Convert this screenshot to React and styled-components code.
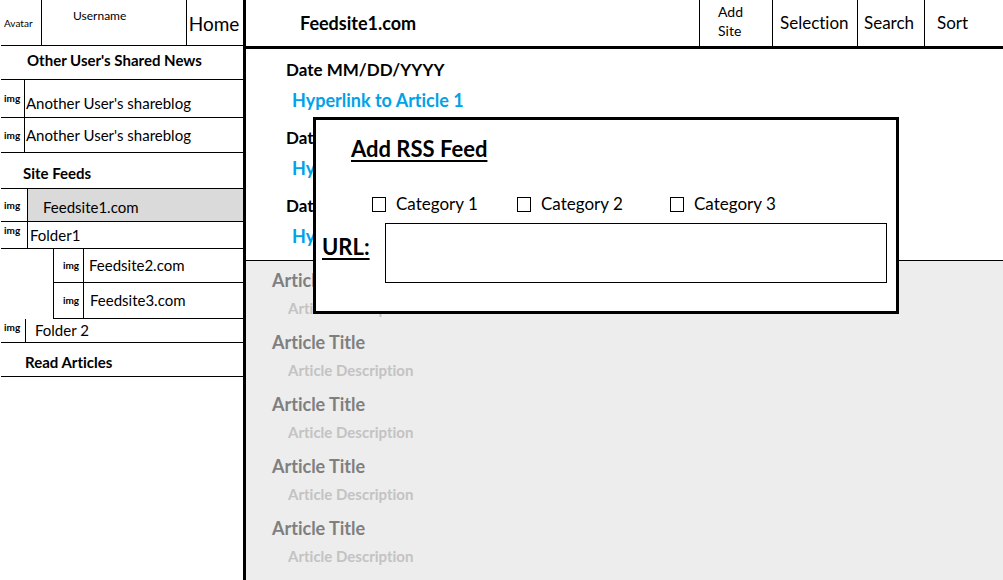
import React from "react";
import styled, { createGlobalStyle, css } from "styled-components";

const GlobalStyle = createGlobalStyle`
  *, *::before, *::after { box-sizing: border-box; }
  body {
    margin: 0;
    background: #fff;
    color: #000;
    font-family: Lato, "Liberation Sans", sans-serif;
    font-size: 15px;
    font-variant-ligatures: none;
    line-height: 20px;
  }
  h1, h2, h3, p, ul { margin: 0; padding: 0; }
  ul { list-style: none; }
  a { color: inherit; text-decoration: none; }
  button, input { font: inherit; font-variant-ligatures: none; color: inherit; }
`;

const Page = styled.div`
  display: grid;
  grid-template-columns: 246px minmax(0, 1fr);
  min-height: 100vh;
`;

const Sidebar = styled.aside`
  border-right: 3px solid #000;
  padding-left: 1px;
`;

const Profile = styled.header`
  display: flex;
  height: 46px;
  border-bottom: 1px solid #000;
`;

const Avatar = styled.div`
  display: flex;
  align-items: center;
  width: 41px;
  padding-left: 3px;
  border-right: 1px solid #000;
  font-size: 10px;
`;

const Username = styled.div`
  flex: 1;
  padding: 6px 0 0 31px;
  font-size: 12px;
`;

const HomeLink = styled.a`
  display: flex;
  align-items: center;
  justify-content: center;
  width: 57px;
  padding: 2px 2px 0 0;
  border-left: 1px solid #000;
  font-size: 19px;
`;

const SectionTitle = styled.h2`
  height: ${(p) => p.$height}px;
  padding: ${(p) => p.$top}px 0 0 ${(p) => p.$indent}px;
  border-bottom: 1px solid #000;
  font-size: 15px;
  font-weight: 700;
`;

const Row = styled.li`
  display: flex;
  height: ${(p) => p.$height}px;
  border-bottom: 1px solid #000;
  ${(p) =>
    p.$nested &&
    css`
      margin-left: 52px;
      border-left: 1px solid #000;
    `}
`;

const Thumb = styled.span`
  display: flex;
  align-items: ${(p) => (p.$top ? "flex-start" : "center")};
  justify-content: ${(p) => (p.$nested ? "center" : "flex-start")};
  flex: none;
  width: ${(p) => p.$width}px;
  padding: 1px 0 2px ${(p) => (p.$nested ? 5 : 3)}px;
  border-right: 1px solid #000;
  font-size: 10px;
  font-weight: 700;
  line-height: 14px;
`;

const RowLink = styled.a`
  display: flex;
  flex: 1;
  align-items: ${(p) => (p.$low ? "flex-end" : "center")};
  padding: ${(p) => (p.$low ? "0 0 4px" : "0 0 1px")};
  padding-left: ${(p) => p.$indent}px;
  background: ${(p) => (p.$active ? "#dadada" : "transparent")};
`;

const Main = styled.main`
  position: relative;
  display: flex;
  flex-direction: column;
`;

const TopBar = styled.header`
  display: flex;
  height: 49px;
  border-bottom: 3px solid #000;
`;

const SiteName = styled.h1`
  flex: 1;
  align-self: center;
  padding-left: 54px;
  font-size: 18px;
  font-weight: 700;
`;

const Action = styled.button`
  width: ${(p) => p.$width}px;
  padding: 0 ${(p) => p.$side}px ${(p) => (p.$small ? 4 : 1)}px;
  border: 0;
  border-left: 1px solid #000;
  background: none;
  text-align: left;
  font-size: ${(p) => (p.$small ? 14 : 17)}px;
  line-height: 19px;
`;

const Dates = styled.section`
  display: flex;
  flex-direction: column;
  gap: 18px;
  height: 212px;
  padding: 11px 0 0 40px;
  border-bottom: 1px solid #000;
  font-weight: 700;
`;

const DateTitle = styled.h2`
  font-size: 17px;
  line-height: 20px;
`;

const ArticleLink = styled.a`
  display: block;
  margin-top: 10px;
  padding-left: 6px;
  color: #00a2e8;
  font-size: 18px;
`;

const Articles = styled.section`
  display: flex;
  flex: 1;
  flex-direction: column;
  gap: 14px;
  padding: 9px 0 4px 26px;
  background: #ededed;
`;

const ArticleTitle = styled.h3`
  color: #7f7f7f;
  font-size: 18px;
  line-height: 20px;
`;

const Description = styled.p`
  margin-top: 8px;
  padding-left: 16px;
  color: #c3c3c3;
  font-size: 15px;
  font-weight: 700;
`;

const Dialog = styled.form`
  position: absolute;
  top: 117px;
  left: 67px;
  right: 104px;
  padding: 15px 9px 28px 6px;
  border: 3px solid #000;
  background: #fff;
`;

const underlined = css`
  font-size: 22px;
  font-weight: 700;
  line-height: 28px;
  text-decoration: underline 2px;
  text-underline-offset: 3px;
  text-decoration-skip-ink: none;
`;

const DialogTitle = styled.h2`
  ${underlined}
  padding-left: 29px;
`;

const Categories = styled.div`
  display: grid;
  grid-template-columns: 145px 153px 1fr;
  margin: 29px 0 7px;
  padding-left: 50px;
`;

const Category = styled.label`
  display: flex;
  align-items: center;
  gap: 10px;
  font-size: 17px;
  line-height: 24px;
`;

const Checkbox = styled.input`
  appearance: none;
  width: 14px;
  height: 15px;
  margin: 0;
  border: 1px solid #000;
  background: #fff;
  &:checked { background: #000; }
`;

const UrlRow = styled.div`
  display: flex;
`;

const UrlLabel = styled.label`
  ${underlined}
  flex: none;
  width: 63px;
  padding-top: 10px;
`;

const UrlInput = styled.input`
  flex: 1;
  min-width: 0;
  height: 60px;
  padding: 0 12px;
  border: 1px solid #000;
  border-radius: 0;
  background: #fff;
  font-size: 17px;
`;

const shareblogs = [
  { name: "Another User's shareblog", height: 38, thumb: 24, indent: 1, low: true },
  { name: "Another User's shareblog", height: 35, thumb: 24, indent: 1 },
];

const feeds = [
  { name: "Feedsite1.com", height: 33, thumb: 27, indent: 15, low: true, active: true },
  { name: "Folder1", height: 27, thumb: 27, indent: 2, top: true },
  { name: "Feedsite2.com", height: 34, thumb: 30, indent: 5, nested: true },
  { name: "Feedsite3.com", height: 36, thumb: 30, indent: 6, nested: true },
  { name: "Folder 2", height: 24, thumb: 25, indent: 9, top: true },
];

const actions = [
  { name: "Add Site", width: 73, side: 18, small: true },
  { name: "Selection", width: 85, side: 7 },
  { name: "Search", width: 67, side: 6 },
  { name: "Sort", width: 79, side: 12 },
];

const FeedList = ({ items }) => (
  <ul>
    {items.map((item, i) => (
      <Row key={i} $height={item.height} $nested={item.nested}>
        <Thumb $width={item.thumb} $top={item.top} $nested={item.nested}>img</Thumb>
        <RowLink href="#" $indent={item.indent} $low={item.low} $active={item.active}>
          {item.name}
        </RowLink>
      </Row>
    ))}
  </ul>
);

export default function App() {
  return (
    <>
      <GlobalStyle />
      <Page>
        <Sidebar>
          <Profile>
            <Avatar>Avatar</Avatar>
            <Username>Username</Username>
            <HomeLink href="#">Home</HomeLink>
          </Profile>
          <nav>
            <SectionTitle $height={34} $indent={26} $top={4}>Other User's Shared News</SectionTitle>
            <FeedList items={shareblogs} />
            <SectionTitle $height={36} $indent={22} $top={10}>Site Feeds</SectionTitle>
            <FeedList items={feeds} />
            <SectionTitle $height={34} $indent={24} $top={9}>Read Articles</SectionTitle>
          </nav>
        </Sidebar>
        <Main>
          <TopBar>
            <SiteName>Feedsite1.com</SiteName>
            {actions.map((a) => (
              <Action key={a.name} type="button" $width={a.width} $side={a.side} $small={a.small}>
                {a.name}
              </Action>
            ))}
          </TopBar>
          <Dates>
            {[1, 2, 3].map((n) => (
              <div key={n}>
                <DateTitle>Date MM/DD/YYYY</DateTitle>
                <ArticleLink href="#">Hyperlink to Article {n}</ArticleLink>
              </div>
            ))}
          </Dates>
          <Articles>
            {[1, 2, 3, 4, 5].map((n) => (
              <article key={n}>
                <ArticleTitle>Article Title</ArticleTitle>
                <Description>Article Description</Description>
              </article>
            ))}
          </Articles>
          <Dialog role="dialog" aria-labelledby="add-feed-title" onSubmit={(e) => e.preventDefault()}>
            <DialogTitle id="add-feed-title">Add RSS Feed</DialogTitle>
            <Categories>
              {[1, 2, 3].map((n) => (
                <Category key={n}>
                  <Checkbox type="checkbox" />
                  Category {n}
                </Category>
              ))}
            </Categories>
            <UrlRow>
              <UrlLabel htmlFor="feed-url">URL:</UrlLabel>
              <UrlInput id="feed-url" type="text" />
            </UrlRow>
          </Dialog>
        </Main>
      </Page>
    </>
  );
}
